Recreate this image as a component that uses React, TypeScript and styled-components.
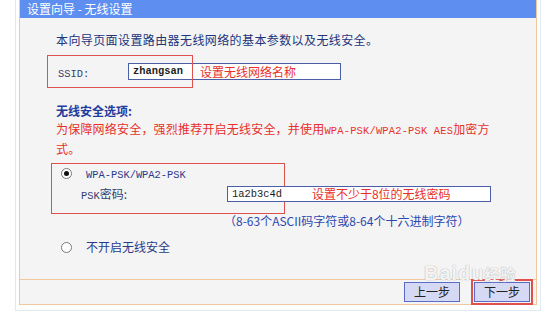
import styled, { createGlobalStyle } from "styled-components";

const GlobalStyle = createGlobalStyle`
  html, body {
    margin: 0;
    padding: 0;
    background: #ffffff;
  }
  body {
    font-family: "Noto Sans CJK SC", "Liberation Sans", sans-serif;
    font-size: 12px;
  }
`;

const Frame = styled.div`
  margin-left: 15px;
  width: 521px;
  padding: 0 0 5px 3px;
  border: 1px solid #e2e8f0;
  border-top: none;
  position: relative;
`;

const Panel = styled.div`
  width: 516px;
  border: 1px solid #f2c79e;
  border-top: none;
  background: #f4f4f4;
`;

const TitleBar = styled.div`
  height: 18px;
  line-height: 18px;
  padding-left: 7px;
  background: #5e8ff0;
  color: #ffffff;
  font-size: 12px;
  white-space: pre;
`;

const Content = styled.div`
  padding: 14px 0 24px 36px;
  display: flex;
  flex-direction: column;
`;

const Intro = styled.div`
  height: 16px;
  line-height: 16px;
  color: #22347a;
  letter-spacing: 0.4px;
`;

const Row = styled.div<{ $top: number; $indent?: number; $height?: number }>`
  position: relative;
  display: flex;
  align-items: center;
  height: ${(p) => p.$height ?? 16}px;
  margin-top: ${(p) => p.$top}px;
  margin-left: ${(p) => p.$indent ?? 0}px;
  line-height: 16px;
`;

const Label = styled.span<{ $width: number }>`
  width: ${(p) => p.$width}px;
  flex-shrink: 0;
  color: #34406e;
`;

const Mono = styled.span<{ $bold?: boolean }>`
  font-family: "Liberation Mono", monospace;
  font-size: 10.4px;
  line-height: 1;
  font-weight: ${(p) => (p.$bold ? 700 : 400)};
`;

const Field = styled.div<{ $width: number; $height: number; $gap: number }>`
  box-sizing: border-box;
  width: ${(p) => p.$width}px;
  height: ${(p) => p.$height}px;
  display: flex;
  align-items: center;
  gap: ${(p) => p.$gap}px;
  padding-left: 4px;
  background: #ffffff;
  border: 1px solid #4b5fa8;
  color: #1c1c1c;
`;

const Note = styled.span`
  color: #e8302a;
  font-size: 12px;
`;

const Mark = styled.div<{ $l: number; $t: number; $w: number; $h: number }>`
  position: absolute;
  left: ${(p) => p.$l}px;
  top: ${(p) => p.$t}px;
  width: ${(p) => p.$w}px;
  height: ${(p) => p.$h}px;
  border: 1.5px solid #e0504c;
  box-sizing: border-box;
  pointer-events: none;
`;

const SectionTitle = styled.div`
  margin-top: 23px;
  height: 16px;
  line-height: 16px;
  color: #1f3c9e;
  font-weight: 700;
`;

const Warning = styled.div`
  height: 40px;
  line-height: 20px;
  color: #e8302a;
  letter-spacing: 0.2px;
`;

const Group = styled.div`
  position: relative;
  margin-top: 6px;
`;

const Radio = styled.span<{ $checked?: boolean }>`
  box-sizing: border-box;
  width: 11px;
  height: 11px;
  margin: 0 14px 0 5px;
  border-radius: 50%;
  border: 1px solid #7a7a7a;
  background: #ffffff;
  display: flex;
  align-items: center;
  justify-content: center;

  &::after {
    content: "";
    display: ${(p) => (p.$checked ? "block" : "none")};
    width: 5px;
    height: 5px;
    border-radius: 50%;
    background: #111111;
  }
`;

const OptionText = styled.span`
  color: #2a3a8a;
`;

const Hint = styled.div`
  margin: 11px 0 0 168px;
  height: 16px;
  line-height: 16px;
  color: #2c48b0;
`;

const Footer = styled.div`
  border-top: 1px solid #f2c79e;
  height: 24px;
  display: flex;
  justify-content: flex-end;
  align-items: center;
  gap: 14px;
  padding-right: 6px;
`;

const Button = styled.button<{ $active?: boolean }>`
  box-sizing: border-box;
  width: 56px;
  height: 20px;
  padding: 0;
  background: #d6d9f4;
  border: 1px solid #5a6cc6;
  color: #222222;
  font-family: "Noto Sans CJK SC", sans-serif;
  font-size: 12px;
  line-height: 18px;
  outline: ${(p) => (p.$active ? "2px solid #e0504c" : "none")};
  outline-offset: 1px;
`;

const Watermark = styled.div`
  position: absolute;
  left: 408px;
  top: 262px;
  font-family: "Liberation Sans", sans-serif;
  font-size: 20px;
  font-weight: 700;
  color: rgba(255, 255, 255, 0.85);
  text-shadow: 0 0 1px #b8b8b8, 0 0 1px #b8b8b8;
  pointer-events: none;
  letter-spacing: 1px;

  span {
    font-family: "Noto Sans CJK SC", sans-serif;
    font-size: 15px;
  }
`;

export default function App() {
  return (
    <>
      <GlobalStyle />
      <Frame>
        <Panel>
          <TitleBar>设置向导 - 无线设置</TitleBar>
          <Content>
            <Intro>本向导页面设置路由器无线网络的基本参数以及无线安全。</Intro>

            <Row $top={15} $indent={2} $height={17}>
              <Mark $l={-11} $t={-8} $w={146} $h={33} />
              <Label $width={70}>
                <Mono>SSID:</Mono>
              </Label>
              <Field $width={213} $height={17} $gap={17}>
                <Mono $bold>zhangsan</Mono>
                <Note>设置无线网络名称</Note>
              </Field>
            </Row>

            <SectionTitle>无线安全选项:</SectionTitle>
            <Warning>
              为保障网络安全，强烈推荐开启无线安全，并使用
              <Mono>WPA-PSK/WPA2-PSK AES</Mono>加密方
              <br />
              式。
            </Warning>

            <Group>
              <Mark $l={-5} $t={-2} $w={234} $h={51} />
              <Row $top={0}>
                <Radio $checked />
                <OptionText>
                  <Mono>WPA-PSK/WPA2-PSK</Mono>
                </OptionText>
              </Row>
              <Row $top={5} $indent={25}>
                <Label $width={146}>
                  <Mono>PSK</Mono>密码:
                </Label>
                <Field $width={264} $height={16} $gap={30}>
                  <Mono>1a2b3c4d</Mono>
                  <Note>设置不少于8位的无线密码</Note>
                </Field>
              </Row>
            </Group>

            <Hint>（8-63个ASCII码字符或8-64个十六进制字符）</Hint>

            <Row $top={10}>
              <Radio />
              <OptionText>不开启无线安全</OptionText>
            </Row>
          </Content>
          <Footer>
            <Button>上一步</Button>
            <Button $active>下一步</Button>
          </Footer>
        </Panel>
        <Watermark>
          Baidu<span>经验</span>
        </Watermark>
      </Frame>
    </>
  );
}
